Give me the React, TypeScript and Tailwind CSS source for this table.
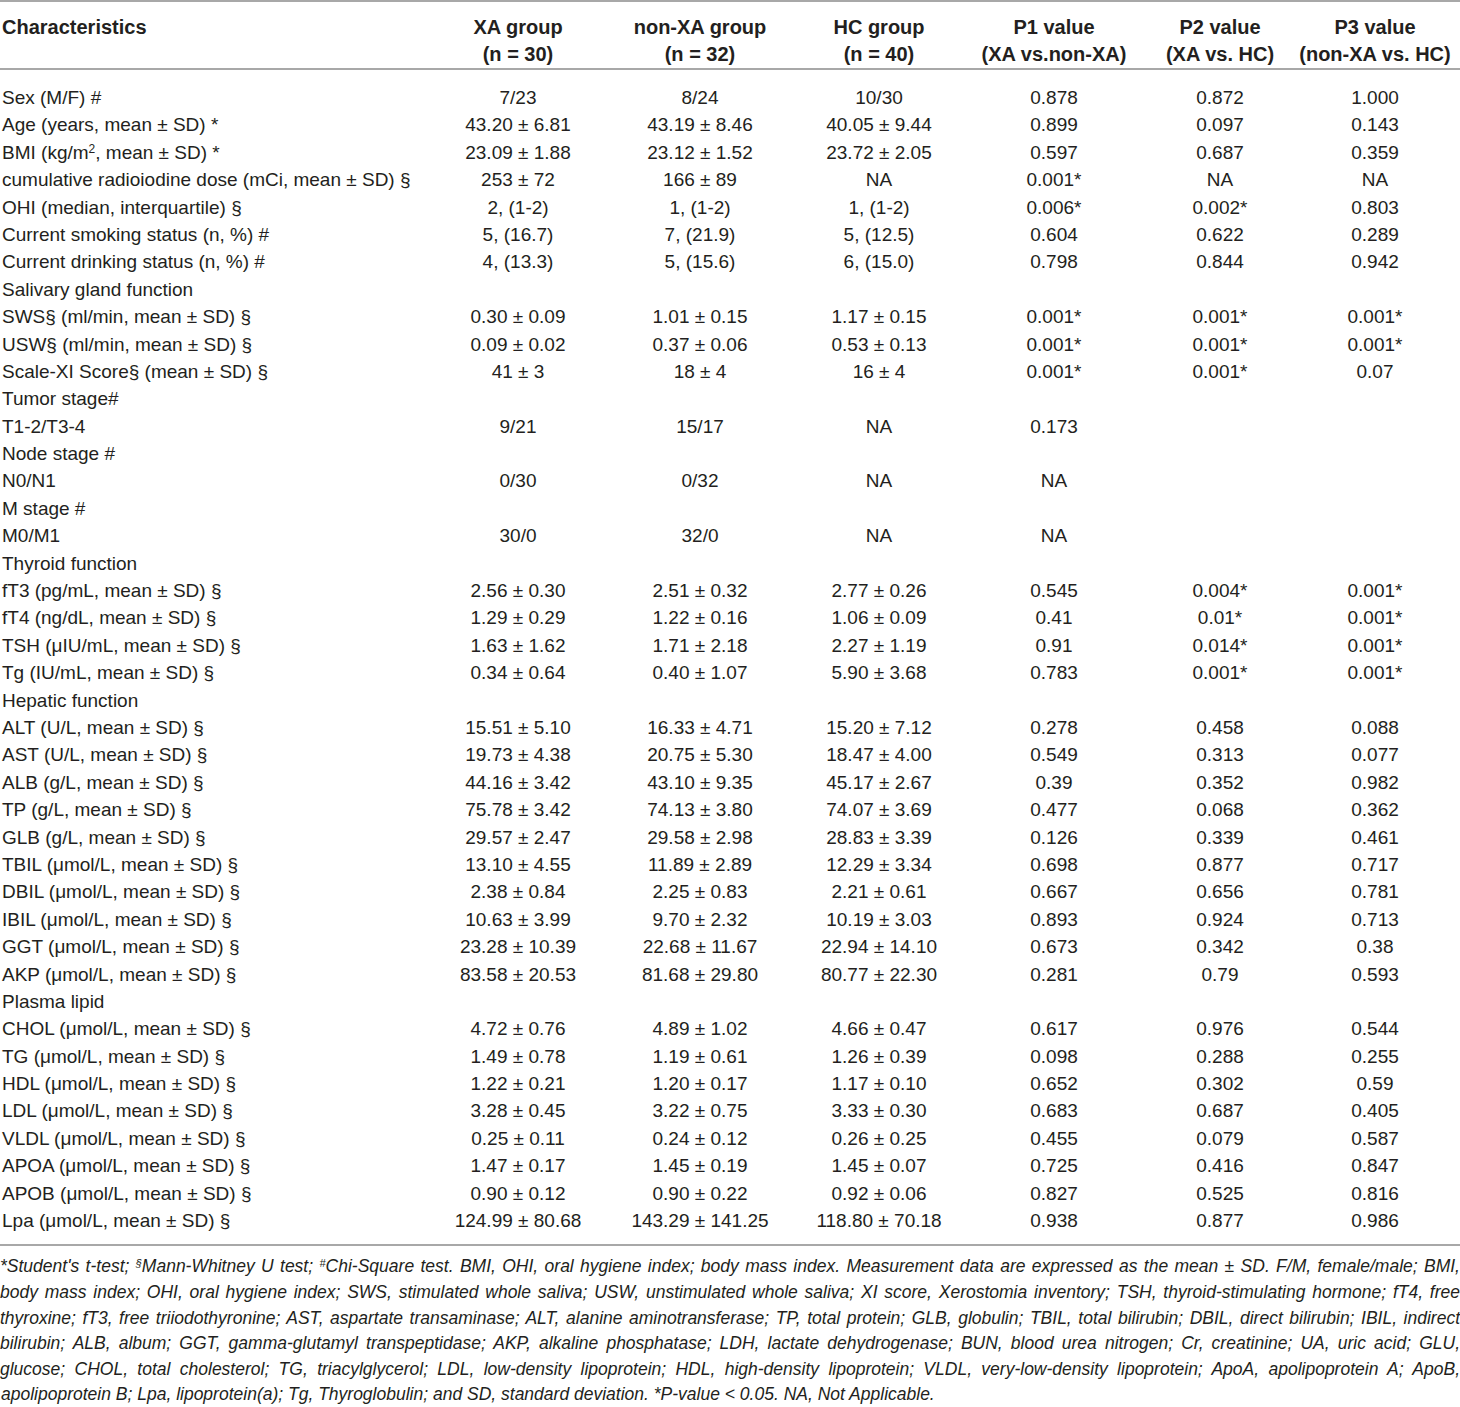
const rows: (string | React.ReactNode)[][] = [
  ["Sex (M/F) #", "7/23", "8/24", "10/30", "0.878", "0.872", "1.000"],
  ["Age (years, mean ± SD) *", "43.20 ± 6.81", "43.19 ± 8.46", "40.05 ± 9.44", "0.899", "0.097", "0.143"],
  [
    <>
      BMI (kg/m<sup className="text-[12px]">2</sup>, mean ± SD) *
    </>,
    "23.09 ± 1.88", "23.12 ± 1.52", "23.72 ± 2.05", "0.597", "0.687", "0.359",
  ],
  ["cumulative radioiodine dose (mCi, mean ± SD) §", "253 ± 72", "166 ± 89", "NA", "0.001*", "NA", "NA"],
  ["OHI (median, interquartile) §", "2, (1-2)", "1, (1-2)", "1, (1-2)", "0.006*", "0.002*", "0.803"],
  ["Current smoking status (n, %) #", "5, (16.7)", "7, (21.9)", "5, (12.5)", "0.604", "0.622", "0.289"],
  ["Current drinking status (n, %) #", "4, (13.3)", "5, (15.6)", "6, (15.0)", "0.798", "0.844", "0.942"],
  ["Salivary gland function"],
  ["SWS§ (ml/min, mean ± SD) §", "0.30 ± 0.09", "1.01 ± 0.15", "1.17 ± 0.15", "0.001*", "0.001*", "0.001*"],
  ["USW§ (ml/min, mean ± SD) §", "0.09 ± 0.02", "0.37 ± 0.06", "0.53 ± 0.13", "0.001*", "0.001*", "0.001*"],
  ["Scale-XI Score§ (mean ± SD) §", "41 ± 3", "18 ± 4", "16 ± 4", "0.001*", "0.001*", "0.07"],
  ["Tumor stage#"],
  ["T1-2/T3-4", "9/21", "15/17", "NA", "0.173", "", ""],
  ["Node stage #"],
  ["N0/N1", "0/30", "0/32", "NA", "NA", "", ""],
  ["M stage #"],
  ["M0/M1", "30/0", "32/0", "NA", "NA", "", ""],
  ["Thyroid function"],
  ["fT3 (pg/mL, mean ± SD) §", "2.56 ± 0.30", "2.51 ± 0.32", "2.77 ± 0.26", "0.545", "0.004*", "0.001*"],
  ["fT4 (ng/dL, mean ± SD) §", "1.29 ± 0.29", "1.22 ± 0.16", "1.06 ± 0.09", "0.41", "0.01*", "0.001*"],
  ["TSH (μIU/mL, mean ± SD) §", "1.63 ± 1.62", "1.71 ± 2.18", "2.27 ± 1.19", "0.91", "0.014*", "0.001*"],
  ["Tg (IU/mL, mean ± SD) §", "0.34 ± 0.64", "0.40 ± 1.07", "5.90 ± 3.68", "0.783", "0.001*", "0.001*"],
  ["Hepatic function"],
  ["ALT (U/L, mean ± SD) §", "15.51 ± 5.10", "16.33 ± 4.71", "15.20 ± 7.12", "0.278", "0.458", "0.088"],
  ["AST (U/L, mean ± SD) §", "19.73 ± 4.38", "20.75 ± 5.30", "18.47 ± 4.00", "0.549", "0.313", "0.077"],
  ["ALB (g/L, mean ± SD) §", "44.16 ± 3.42", "43.10 ± 9.35", "45.17 ± 2.67", "0.39", "0.352", "0.982"],
  ["TP (g/L, mean ± SD) §", "75.78 ± 3.42", "74.13 ± 3.80", "74.07 ± 3.69", "0.477", "0.068", "0.362"],
  ["GLB (g/L, mean ± SD) §", "29.57 ± 2.47", "29.58 ± 2.98", "28.83 ± 3.39", "0.126", "0.339", "0.461"],
  ["TBIL (μmol/L, mean ± SD) §", "13.10 ± 4.55", "11.89 ± 2.89", "12.29 ± 3.34", "0.698", "0.877", "0.717"],
  ["DBIL (μmol/L, mean ± SD) §", "2.38 ± 0.84", "2.25 ± 0.83", "2.21 ± 0.61", "0.667", "0.656", "0.781"],
  ["IBIL (μmol/L, mean ± SD) §", "10.63 ± 3.99", "9.70 ± 2.32", "10.19 ± 3.03", "0.893", "0.924", "0.713"],
  ["GGT (μmol/L, mean ± SD) §", "23.28 ± 10.39", "22.68 ± 11.67", "22.94 ± 14.10", "0.673", "0.342", "0.38"],
  ["AKP (μmol/L, mean ± SD) §", "83.58 ± 20.53", "81.68 ± 29.80", "80.77 ± 22.30", "0.281", "0.79", "0.593"],
  ["Plasma lipid"],
  ["CHOL (μmol/L, mean ± SD) §", "4.72 ± 0.76", "4.89 ± 1.02", "4.66 ± 0.47", "0.617", "0.976", "0.544"],
  ["TG (μmol/L, mean ± SD) §", "1.49 ± 0.78", "1.19 ± 0.61", "1.26 ± 0.39", "0.098", "0.288", "0.255"],
  ["HDL (μmol/L, mean ± SD) §", "1.22 ± 0.21", "1.20 ± 0.17", "1.17 ± 0.10", "0.652", "0.302", "0.59"],
  ["LDL (μmol/L, mean ± SD) §", "3.28 ± 0.45", "3.22 ± 0.75", "3.33 ± 0.30", "0.683", "0.687", "0.405"],
  ["VLDL (μmol/L, mean ± SD) §", "0.25 ± 0.11", "0.24 ± 0.12", "0.26 ± 0.25", "0.455", "0.079", "0.587"],
  ["APOA (μmol/L, mean ± SD) §", "1.47 ± 0.17", "1.45 ± 0.19", "1.45 ± 0.07", "0.725", "0.416", "0.847"],
  ["APOB (μmol/L, mean ± SD) §", "0.90 ± 0.12", "0.90 ± 0.22", "0.92 ± 0.06", "0.827", "0.525", "0.816"],
  ["Lpa (μmol/L, mean ± SD) §", "124.99 ± 80.68", "143.29 ± 141.25", "118.80 ± 70.18", "0.938", "0.877", "0.986"],
];

const headers: [string, string][] = [
  ["XA group", "(n = 30)"],
  ["non-XA group", "(n = 32)"],
  ["HC group", "(n = 40)"],
  ["P1 value", "(XA vs.non-XA)"],
  ["P2 value", "(XA vs. HC)"],
  ["P3 value", "(non-XA vs. HC)"],
];

const cols = "grid grid-cols-[436px_164px_200px_158px_192px_140px_170px]";

// footnote is set line by line so the justified breaks match the print
const notes: React.ReactNode[] = [
  <>
    *Student's t-test; <sup className="text-[11px]">§</sup>Mann-Whitney U test; <sup className="text-[11px]">#</sup>Chi-Square test. BMI, OHI, oral hygiene index; body mass index. Measurement data are expressed as the mean ± SD. F/M, female/male; BMI,
  </>,
  "body mass index; OHI, oral hygiene index; SWS, stimulated whole saliva; USW, unstimulated whole saliva; XI score, Xerostomia inventory; TSH, thyroid-stimulating hormone; fT4, free",
  "thyroxine; fT3, free triiodothyronine; AST, aspartate transaminase; ALT, alanine aminotransferase; TP, total protein; GLB, globulin; TBIL, total bilirubin; DBIL, direct bilirubin; IBIL, indirect",
  "bilirubin; ALB, album; GGT, gamma-glutamyl transpeptidase; AKP, alkaline phosphatase; LDH, lactate dehydrogenase; BUN, blood urea nitrogen; Cr, creatinine; UA, uric acid; GLU,",
  "glucose; CHOL, total cholesterol; TG, triacylglycerol; LDL, low-density lipoprotein; HDL, high-density lipoprotein; VLDL, very-low-density lipoprotein; ApoA, apolipoprotein A; ApoB,",
];

export default function App() {
  return (
    <div className="w-[1460px] bg-white text-[#231f20] font-['Liberation_Sans',Arial,sans-serif]">
      <div className="border-t-2 border-[#a8a8a8]" />
      <div className={`${cols} pt-[12px] pb-0 text-[20px] leading-[27px] font-bold`}>
        <div className="pl-[2px]">Characteristics</div>
        {headers.map(([a, b]) => (
          <div key={a} className="text-center whitespace-nowrap">
            <div>{a}</div>
            <div>{b}</div>
          </div>
        ))}
      </div>
      <div className="border-t-2 border-[#a8a8a8]" />
      <div className="pt-[14px] pb-[10px] text-[19px] leading-[27.4px]">
        {rows.map((r, i) => (
          <div key={i} className={`${cols} h-[27.4px]`}>
            <div className="pl-[2px] whitespace-nowrap">{r[0]}</div>
            {r.slice(1).map((v, j) => (
              <div key={j} className="text-center whitespace-nowrap">
                {v}
              </div>
            ))}
          </div>
        ))}
      </div>
      <div className="border-t-2 border-[#a8a8a8]" />
      <div className="pt-[8px] text-[17.5px] leading-[25.6px] italic">
        {notes.map((n, i) => (
          <div key={i} className="text-justify [text-align-last:justify] whitespace-nowrap">
            {n}
          </div>
        ))}
        <div className="pl-[1px]">
          apolipoprotein B; Lpa, lipoprotein(a); Tg, Thyroglobulin; and SD, standard deviation. *P-value &lt; 0.05. NA, Not Applicable.
        </div>
      </div>
    </div>
  );
}
